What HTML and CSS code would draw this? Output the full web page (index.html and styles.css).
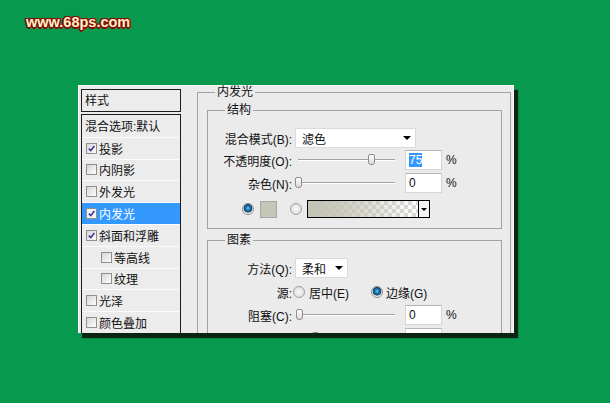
FILE: index.html
```html
<!DOCTYPE html>
<html lang="zh">
<head>
<meta charset="utf-8">
<title>内发光</title>
<link rel="stylesheet" href="styles.css">
</head>
<body>
<div class="logo">www.68ps.com</div>
<div class="dialog">
  <div class="side">
    <div class="side-head">样式</div>
    <ul class="style-list">
      <li class="item plain">混合选项:默认</li>
      <li class="item"><span class="cb on"><svg viewBox="0 0 9 9"><path d="M1.8 4.6 L3.8 6.6 L7.4 2"/></svg></span>投影</li>
      <li class="item"><span class="cb"></span>内阴影</li>
      <li class="item"><span class="cb"></span>外发光</li>
      <li class="item sel"><span class="cb on"><svg viewBox="0 0 9 9"><path d="M1.8 4.6 L3.8 6.6 L7.4 2"/></svg></span>内发光</li>
      <li class="item"><span class="cb on"><svg viewBox="0 0 9 9"><path d="M1.8 4.6 L3.8 6.6 L7.4 2"/></svg></span>斜面和浮雕</li>
      <li class="item sub"><span class="cb"></span>等高线</li>
      <li class="item sub"><span class="cb"></span>纹理</li>
      <li class="item"><span class="cb"></span>光泽</li>
      <li class="item"><span class="cb"></span>颜色叠加</li>
    </ul>
  </div>
  <fieldset class="grp outer">
    <legend>内发光</legend>
    <fieldset class="grp inner">
      <legend>结构</legend>
      <div class="row r1">
        <span class="lbl">混合模式(B):</span>
        <div class="select mode"><span>滤色</span><i class="arrow"></i></div>
      </div>
      <div class="row r2">
        <span class="lbl">不透明度(O):</span>
        <div class="slider"><span class="thumb" style="left:70px"></span></div>
        <div class="num"><span class="hl">75</span></div>
        <span class="pct">%</span>
      </div>
      <div class="row r3">
        <span class="lbl">杂色(N):</span>
        <div class="slider"><span class="thumb" style="left:-3px"></span></div>
        <div class="num">0</div>
        <span class="pct">%</span>
      </div>
      <div class="row r4">
        <span class="radio on"></span>
        <span class="swatch"></span>
        <span class="radio r-grad"></span>
        <div class="gradbox"><span class="gradfill"></span><span class="gradbtn"><i class="arrow small"></i></span></div>
      </div>
    </fieldset>
    <fieldset class="grp inner pic">
      <legend>图素</legend>
      <div class="row m1">
        <span class="lbl">方法(Q):</span>
        <div class="select method"><span>柔和</span><i class="arrow"></i></div>
      </div>
      <div class="row m2">
        <span class="lbl">源:</span>
        <span class="radio src"></span><span class="opt">居中(E)</span>
        <span class="radio on"></span><span class="opt2">边缘(G)</span>
      </div>
      <div class="row m3">
        <span class="lbl">阻塞(C):</span>
        <div class="slider"><span class="thumb" style="left:-2px"></span></div>
        <div class="num">0</div>
        <span class="pct">%</span>
      </div>
      <div class="row m4">
        <span class="lbl">大小(S):</span>
        <div class="slider"><span class="thumb" style="left:14px"></span></div>
        <div class="num">5</div>
        <span class="pct">像素</span>
      </div>
    </fieldset>
  </fieldset>
</div>
</body>
</html>
```
FILE: styles.css
```css
* { box-sizing: border-box; }
html, body { margin: 0; padding: 0; }
body {
  width: 610px;
  height: 403px;
  overflow: hidden;
  background: #079a4e;
  font-family: "Liberation Sans", "Noto Sans CJK SC", sans-serif;
  font-size: 12px;
  color: #111;
}
.logo {
  height: 85px;
  padding: 14px 0 0 26px;
  font: bold 14.5px/16px "Liberation Sans", Arial, sans-serif;
  color: #fff3c4;
  text-shadow:
    1.5px 0 0 #850c0c, -1.5px 0 0 #850c0c, 0 1.5px 0 #850c0c, 0 -1.5px 0 #850c0c,
    1px 1px 0 #850c0c, -1px -1px 0 #850c0c, 1px -1px 0 #850c0c, -1px 1px 0 #850c0c,
    0 0 2px #6a0000;
}
.dialog {
  margin-left: 78px;
  width: 436px;
  height: 248px;
  background: #ebebeb;
  display: flex;
  align-items: flex-start;
  padding: 0 3px;
  overflow: hidden;
  box-shadow: 4px 5px 1px #0a2414, inset 1px 1px 0 #fbfbfb, inset -1px 0 0 #fbfbfb;
}
.side { width: 100px; flex: none; margin-top: 4px; }
.side-head {
  height: 23px;
  border: 1px solid #1c1c1c;
  background: #ececec;
  padding-left: 3px;
  line-height: 23px;
}
.style-list {
  list-style: none;
  margin: 2px 0 0;
  padding: 0;
  border: 1px solid #1c1c1c;
  border-bottom: none;
  background: #ececec;
  height: 240px;
}
.item {
  height: 21.8px;
  display: flex;
  align-items: center;
  padding-left: 4px;
  border-top: 1px solid #fbfbfb;
}
.item.plain { border-top: none; padding-left: 3px; }
.item.sub { padding-left: 19px; }
.item.sel { background: #3399ff; color: #fff; }
.cb {
  width: 11px;
  height: 11px;
  flex: none;
  border: 1px solid #8f8f8f;
  background: linear-gradient(135deg, #d6d6d6, #fdfdfd);
  margin-right: 2px;
  display: flex;
}
.item.sel .cb { background: #f4f4f4; }
.cb svg { width: 9px; height: 9px; }
.cb path { fill: none; stroke: #3f3f9a; stroke-width: 1.6; }

.grp { border: 1px solid #a2a2a2; margin: 0; padding: 0; min-width: 0; }
.grp legend { padding: 0 2px; line-height: 12px; font-size: 12px; }
.outer { margin: 1px 0 0 16px; width: 314px; height: 300px; padding: 0 8px 0 9px; flex: none; }
.outer > legend { margin-left: 8px; }
.inner { margin-top: 6px; padding: 0 0 10px 0; }
.inner > legend { margin-left: 17px; }
.inner.pic { margin-top: 5px; }

.row { display: flex; align-items: center; height: 20px; }
.lbl { width: 84px; flex: none; text-align: right; white-space: nowrap; }
.r1 { margin-top: 12px; }
.r2 { margin-top: 2px; }
.r3 { margin-top: 3px; }
.r4 { margin-top: 7px; height: 18px; padding-left: 34px; }
.m1 { margin-top: 12px; }
.m2 { margin-top: 5px; height: 18px; }
.m3 { margin-top: 4px; }
.m4 { margin-top: 3px; }

.select {
  margin-left: 3px;
  height: 20px;
  background: #fff;
  border: 1px solid #dadada;
  padding: 0 4px 0 6px;
  display: flex;
  align-items: center;
  justify-content: space-between;
  flex: none;
}
.select.mode { width: 121px; }
.select.method { width: 53px; }
.arrow {
  width: 0;
  height: 0;
  border-left: 4px solid transparent;
  border-right: 4px solid transparent;
  border-top: 4px solid #000;
}
.arrow.small { border-left-width: 3px; border-right-width: 3px; border-top-width: 3px; }

.slider {
  margin-left: 6px;
  width: 97px;
  height: 2px;
  flex: none;
  border-top: 1px solid #a3a3a3;
  border-bottom: 1px solid #fff;
  position: relative;
}
.thumb {
  position: absolute;
  top: -6px;
  width: 7px;
  height: 11px;
  border: 1px solid #8c8c8c;
  border-radius: 2px 2px 3px 3px;
  background: linear-gradient(#fdfdfd, #dcdcdc);
}
.num {
  margin-left: 10px;
  width: 37px;
  height: 20px;
  flex: none;
  background: #fff;
  border: 1px solid #d2d5dc;
  border-top-color: #b4b4b4;
  padding-left: 3px;
  line-height: 18px;
}
.num .hl { background: #3399ff; color: #fff; display: inline-block; line-height: 14px; }
.pct { margin-left: 4px; }

.radio {
  width: 12px;
  height: 12px;
  flex: none;
  border-radius: 50%;
  border: 1px solid #a0a0a0;
  background: radial-gradient(circle at 50% 50%, #fafafa, #d6d6d6);
}
.radio.on {
  border-color: #8c8c8c;
  background: radial-gradient(circle at 50% 42%, #7fd0f5 0, #2a8cc6 1.5px, #0e4f80 3.5px, #0c3e66 4px, #dedede 4.6px, #f6f6f6 6px);
}
.swatch {
  margin-left: 6px;
  width: 17px;
  height: 17px;
  flex: none;
  border: 1px solid #a6a6a6;
  background: #c6c6b8;
}
.r-grad { margin-left: 13px; }
.gradbox {
  margin-left: 5px;
  width: 123px;
  height: 18px;
  flex: none;
  border: 1px solid #000;
  display: flex;
}
.gradfill {
  flex: 1;
  background:
    linear-gradient(to right, #c3c3b5 0%, rgba(195,195,181,0.85) 30%, rgba(195,195,181,0) 100%),
    repeating-conic-gradient(#d9d9d9 0 25%, #ffffff 0 50%) 0 0 / 8px 8px;
}
.gradbtn {
  width: 11px;
  flex: none;
  border-left: 1px solid #000;
  background: #f4f4f4;
  display: flex;
  align-items: center;
  justify-content: center;
}
.src { margin-left: 1px; }
.opt { margin-left: 4px; width: 62px; flex: none; }
.opt2 { margin-left: 3px; }
```
